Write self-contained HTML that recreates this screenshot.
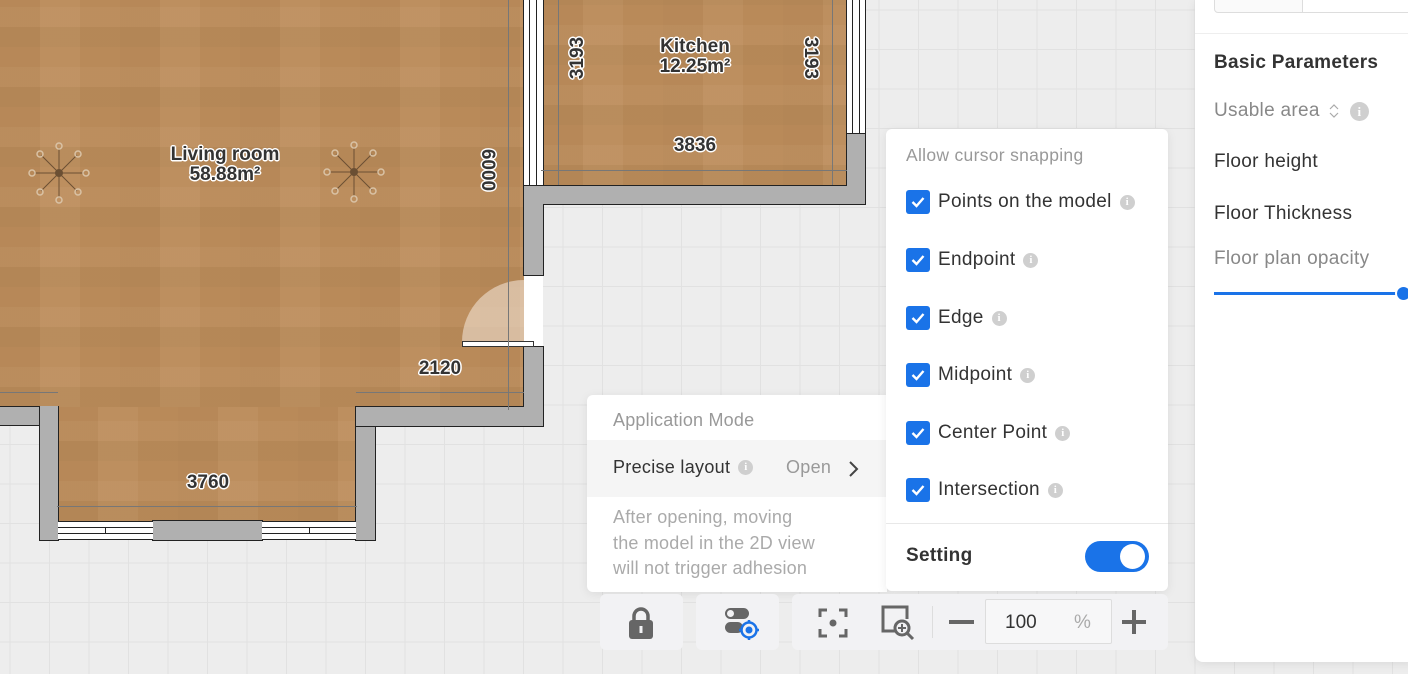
<!DOCTYPE html>
<html><head><meta charset="utf-8"><style>
*{box-sizing:border-box;margin:0;padding:0}
body{width:1408px;height:674px;overflow:hidden;position:relative;font-family:"Liberation Sans",sans-serif;
background-color:#ededed;
background-image:linear-gradient(#e1e1e1 1px,transparent 1px),linear-gradient(90deg,#e1e1e1 1px,transparent 1px);
background-size:39.5px 39.5px;background-position:9.5px 9.5px}
.a{position:absolute}
.wood{background-color:#bd8d5b;
background-image:repeating-linear-gradient(90deg,rgba(0,0,0,.025) 0 40px,rgba(255,255,255,.03) 40px 80px,rgba(0,0,0,.01) 80px 120px),
repeating-linear-gradient(0deg,rgba(0,0,0,.03) 0 20px,rgba(255,255,255,.025) 20px 40px,rgba(0,0,0,.01) 40px 60px);}
.wall{background:#b0b0b0;border:1px solid #222}
.lbl{position:absolute;font-weight:bold;font-size:19px;color:#333;text-align:center;line-height:20px;
text-shadow:-1.5px 0 #fff,1.5px 0 #fff,0 -1.5px #fff,0 1.5px #fff,-1px -1px #fff,1px 1px #fff,-1px 1px #fff,1px -1px #fff}
.dl{position:absolute;background:#777}
.panel{position:absolute;background:#fff;box-shadow:0 2px 10px rgba(0,0,0,.08)}
.it{position:absolute;left:20px;font-size:19px;letter-spacing:.3px;color:#333;display:flex;align-items:center;height:26px}
.cb{width:24px;height:24px;background:#1a73e8;border-radius:3px;margin-right:8px;display:flex;align-items:center;justify-content:center}
.inf{display:inline-block;width:15px;height:15px;border-radius:50%;background:#cfcfcf;color:#fff;font-size:11px;font-weight:bold;text-align:center;line-height:15px;margin-left:8px;font-family:"Liberation Serif",serif;letter-spacing:0}
.btn{position:absolute;background:#f2f2f4;border-radius:6px;top:594px;height:56px}
</style></head><body>

<div class="a wood" style="left:0;top:0;width:524px;height:407px"></div>
<div class="a wood" style="left:58px;top:407px;width:298px;height:114px"></div>
<div class="a wood" style="left:543px;top:0;width:304px;height:185px"></div>
<div class="a wall" style="left:-2px;top:406px;width:60px;height:20px;border-left:none"></div>
<div class="a wall" style="left:39px;top:406px;width:20px;height:135px;border-top:none"></div>
<div class="a" style="left:40px;top:407px;width:18px;height:19px;background:#b0b0b0"></div>
<div class="a wall" style="left:355px;top:406px;width:21px;height:135px"></div>
<div class="a wall" style="left:355px;top:406px;width:189px;height:21px"></div>
<div class="a" style="left:356px;top:407px;width:19px;height:19px;background:#b0b0b0"></div>
<div class="a wall" style="left:523px;top:346px;width:21px;height:81px"></div>
<div class="a" style="left:356px;top:407px;width:187px;height:19px;background:#b0b0b0"></div>
<div class="a wall" style="left:523px;top:185px;width:21px;height:91px"></div>
<div class="a wall" style="left:523px;top:185px;width:343px;height:20px"></div>
<div class="a wall" style="left:846px;top:133px;width:20px;height:72px"></div>
<div class="a" style="left:524px;top:186px;width:341px;height:18px;background:#b0b0b0"></div>
<div class="a" style="left:524px;top:186px;width:19px;height:89px;background:#b0b0b0"></div>
<div class="a" style="left:523px;top:0;width:21px;height:185px;background:#fff;border-left:1px solid #222;border-right:1px solid #222"></div>
<div class="a" style="left:529px;top:0;width:8px;height:185px;border-left:1px solid #222;border-right:1px solid #222"></div>
<div class="a" style="left:846px;top:0;width:20px;height:133px;background:#fff;border-left:1px solid #222;border-right:1px solid #222"></div>
<div class="a" style="left:852px;top:0;width:8px;height:133px;border-left:1px solid #222;border-right:1px solid #222"></div>
<div class="a wall" style="left:152px;top:520px;width:111px;height:21px"></div>
<div class="a" style="left:58px;top:521px;width:95px;height:19px;background:#fff;border-top:1px solid #222;border-bottom:1px solid #222;background-image:linear-gradient(#222,#222),linear-gradient(#222,#222),linear-gradient(#222,#222);background-size:100% 1px,100% 1px,1px 6px;background-position:0 5px,0 11px,47px 5px;background-repeat:no-repeat"></div>
<div class="a" style="left:262px;top:521px;width:94px;height:19px;background:#fff;border-top:1px solid #222;border-bottom:1px solid #222;background-image:linear-gradient(#222,#222),linear-gradient(#222,#222),linear-gradient(#222,#222);background-size:100% 1px,100% 1px,1px 6px;background-position:0 5px,0 11px,47px 5px;background-repeat:no-repeat"></div>
<div class="a" style="left:524px;top:276px;width:19px;height:70px;background:#fff"></div>
<div class="a" style="left:462px;top:280px;width:62px;height:62px;border-top-left-radius:62px;background:rgba(240,225,210,.6)"></div>
<div class="a" style="left:462px;top:341px;width:72px;height:6px;background:#fff;border:1px solid #333"></div>
<div class="dl" style="left:0;top:392px;width:58px;height:1px"></div>
<div class="dl" style="left:356px;top:392px;width:168px;height:1px"></div>
<div class="dl" style="left:508px;top:0;width:1px;height:410px"></div>
<div class="dl" style="left:57px;top:506px;width:300px;height:1px"></div>
<div class="dl" style="left:541px;top:170px;width:306px;height:1px"></div>
<div class="dl" style="left:558px;top:0;width:1px;height:185px"></div>
<div class="dl" style="left:832px;top:0;width:1px;height:185px"></div>
<svg class="a" style="left:26px;top:140px" width="66" height="66" viewBox="0 0 66 66"><g stroke="#6b4f33" stroke-width="1" fill="none"><line x1="33" y1="8" x2="33" y2="58"/><line x1="8" y1="33" x2="58" y2="33"/><line x1="15" y1="15" x2="51" y2="51"/><line x1="51" y1="15" x2="15" y2="51"/></g><circle cx="33" cy="33" r="4" fill="#6b4f33"/><g fill="none" stroke="#d9c2a5" stroke-width="1.5"><circle cx="33" cy="6" r="3"/><circle cx="33" cy="60" r="3"/><circle cx="6" cy="33" r="3"/><circle cx="60" cy="33" r="3"/><circle cx="14" cy="14" r="3"/><circle cx="52" cy="14" r="3"/><circle cx="14" cy="52" r="3"/><circle cx="52" cy="52" r="3"/></g></svg>
<svg class="a" style="left:321px;top:139px" width="66" height="66" viewBox="0 0 66 66"><g stroke="#6b4f33" stroke-width="1" fill="none"><line x1="33" y1="8" x2="33" y2="58"/><line x1="8" y1="33" x2="58" y2="33"/><line x1="15" y1="15" x2="51" y2="51"/><line x1="51" y1="15" x2="15" y2="51"/></g><circle cx="33" cy="33" r="4" fill="#6b4f33"/><g fill="none" stroke="#d9c2a5" stroke-width="1.5"><circle cx="33" cy="6" r="3"/><circle cx="33" cy="60" r="3"/><circle cx="6" cy="33" r="3"/><circle cx="60" cy="33" r="3"/><circle cx="14" cy="14" r="3"/><circle cx="52" cy="14" r="3"/><circle cx="14" cy="52" r="3"/><circle cx="52" cy="52" r="3"/></g></svg>
<div class="lbl" style="left:145px;top:145px;width:160px">Living room<br>58.88m²</div>
<div class="lbl" style="left:615px;top:37px;width:160px">Kitchen<br>12.25m²</div>
<div class="lbl" style="left:410px;top:359px;width:60px">2120</div>
<div class="lbl" style="left:178px;top:473px;width:60px">3760</div>
<div class="lbl" style="left:665px;top:136px;width:60px">3836</div>
<div class="lbl" style="left:548px;top:48px;width:60px;transform:rotate(-90deg)">3193</div>
<div class="lbl" style="left:780px;top:48px;width:60px;transform:rotate(90deg)">3193</div>
<div class="lbl" style="left:457px;top:160px;width:60px;transform:rotate(90deg)">6000</div>

<div class="panel" style="left:1195px;top:0;width:220px;height:662px;border-radius:0 0 0 8px">
 <div class="a" style="left:19px;top:-2px;width:200px;height:15px;border:1px solid #ddd;border-radius:0 0 0 4px;background:#fafafa"></div>
 <div class="a" style="left:107px;top:-2px;width:1px;height:15px;background:#ddd"></div>
 <div class="a" style="left:108px;top:-1px;width:110px;height:13px;background:#fff"></div>
 <div class="a" style="left:0;top:33px;width:220px;height:1px;background:#eee"></div>
 <div class="a" style="left:19px;top:52px;font-size:19px;font-weight:bold;color:#333;letter-spacing:.3px">Basic Parameters</div>
 <div class="a" style="left:19px;top:100px;font-size:19px;color:#888;letter-spacing:.3px;display:flex;align-items:center">Usable area <svg style="margin-left:9px" width="10" height="16" viewBox="0 0 10 16"><path d="M1 6l4-4 4 4M1 10l4 4 4-4" fill="none" stroke="#aaa" stroke-width="1.2"/></svg><span class="inf" style="margin-left:11px;width:19px;height:19px;line-height:19px;font-size:13px">i</span></div>
 <div class="a" style="left:19px;top:151px;font-size:19px;color:#333;letter-spacing:.3px">Floor height</div>
 <div class="a" style="left:19px;top:203px;font-size:19px;color:#333;letter-spacing:.3px">Floor Thickness</div>
 <div class="a" style="left:19px;top:248px;font-size:19px;color:#888;letter-spacing:.3px">Floor plan opacity</div>
 <div class="a" style="left:19px;top:292px;width:190px;height:3px;background:#1a73e8"></div>
 <div class="a" style="left:202px;top:287px;width:13px;height:13px;border-radius:50%;background:#1a73e8;box-shadow:0 0 0 2px #fff"></div>
</div>

<div class="panel" style="left:587px;top:395px;width:300px;height:197px;border-radius:6px 0 0 6px">
 <div class="a" style="left:26px;top:15px;font-size:18px;color:#999;letter-spacing:.2px">Application Mode</div>
 <div class="a" style="left:0;top:45px;width:300px;height:57px;background:#f5f5f5"></div>
 <div class="a" style="left:26px;top:62px;font-size:18px;color:#333;display:flex;align-items:center;letter-spacing:.3px">Precise layout<span class="inf">i</span></div>
 <div class="a" style="left:199px;top:62px;font-size:18px;color:#999;letter-spacing:.3px">Open</div>
 <svg class="a" style="left:260px;top:65px" width="12" height="18" viewBox="0 0 12 18"><path d="M3 2l7 7-7 7" fill="none" stroke="#444" stroke-width="2"/></svg>
 <div class="a" style="left:26px;top:110px;font-size:18px;line-height:25.5px;color:#aaa;letter-spacing:.2px">After opening, moving<br>the model in the 2D view<br>will not trigger adhesion</div>
</div>

<div class="panel" style="left:886px;top:129px;width:282px;height:462px;border-radius:6px">
 <div class="a" style="left:20px;top:16px;font-size:17.5px;color:#999;letter-spacing:.3px">Allow cursor snapping</div>
 <div class="it" style="top:60px"><span class="cb"><svg width="14" height="12" viewBox="0 0 14 12"><path d="M1.5 6l4 4 7-8" fill="none" stroke="#fff" stroke-width="2.4"/></svg></span>Points on the model<span class="inf">i</span></div>
 <div class="it" style="top:118px"><span class="cb"><svg width="14" height="12" viewBox="0 0 14 12"><path d="M1.5 6l4 4 7-8" fill="none" stroke="#fff" stroke-width="2.4"/></svg></span>Endpoint<span class="inf">i</span></div>
 <div class="it" style="top:176px"><span class="cb"><svg width="14" height="12" viewBox="0 0 14 12"><path d="M1.5 6l4 4 7-8" fill="none" stroke="#fff" stroke-width="2.4"/></svg></span>Edge<span class="inf">i</span></div>
 <div class="it" style="top:233px"><span class="cb"><svg width="14" height="12" viewBox="0 0 14 12"><path d="M1.5 6l4 4 7-8" fill="none" stroke="#fff" stroke-width="2.4"/></svg></span>Midpoint<span class="inf">i</span></div>
 <div class="it" style="top:291px"><span class="cb"><svg width="14" height="12" viewBox="0 0 14 12"><path d="M1.5 6l4 4 7-8" fill="none" stroke="#fff" stroke-width="2.4"/></svg></span>Center Point<span class="inf">i</span></div>
 <div class="it" style="top:348px"><span class="cb"><svg width="14" height="12" viewBox="0 0 14 12"><path d="M1.5 6l4 4 7-8" fill="none" stroke="#fff" stroke-width="2.4"/></svg></span>Intersection<span class="inf">i</span></div>
 <div class="a" style="left:0;top:394px;width:282px;height:1px;background:#e8e8e8"></div>
 <div class="a" style="left:20px;top:416px;font-size:19px;font-weight:bold;color:#333;letter-spacing:.3px">Setting</div>
 <div class="a" style="left:199px;top:412px;width:64px;height:31px;border-radius:16px;background:#1a73e8"><div class="a" style="left:35px;top:3px;width:25px;height:25px;border-radius:50%;background:#fff"></div></div>
</div>

<div class="btn" style="left:600px;width:83px"><svg class="a" style="left:26px;top:12px" width="30" height="34" viewBox="0 0 30 34"><path d="M8 15V10a7 7 0 0 1 14 0v5" fill="none" stroke="#666" stroke-width="3.5"/><rect x="3" y="14" width="24" height="19" rx="3" fill="#666"/><rect x="13.5" y="20" width="3" height="7" fill="#f2f2f4"/></svg></div>
<div class="btn" style="left:696px;width:83px"><svg class="a" style="left:26px;top:12px" width="40" height="36" viewBox="0 0 40 36"><rect x="3" y="2" width="24" height="11" rx="5.5" fill="#666"/><circle cx="8.5" cy="7.5" r="3.5" fill="#f2f2f4"/><rect x="3" y="16" width="18" height="11" rx="5.5" fill="#666"/><circle cx="27" cy="24" r="7.5" fill="none" stroke="#1a73e8" stroke-width="2.5"/><circle cx="27" cy="24" r="3.5" fill="#1a73e8"/><path d="M27 14v3M27 31v3M17 24h3M34 24h3" stroke="#1a73e8" stroke-width="2.5"/></svg></div>
<div class="btn" style="left:792px;width:376px">
 <svg class="a" style="left:26px;top:14px" width="30" height="30" viewBox="0 0 30 30"><path d="M2 9V2h7M21 2h7v7M28 21v7h-7M9 28H2v-7" fill="none" stroke="#666" stroke-width="3"/><circle cx="15" cy="15" r="3.5" fill="#666"/></svg>
 <svg class="a" style="left:88px;top:10px" width="36" height="38" viewBox="0 0 36 38"><path d="M16 27H3V3h24v12" fill="none" stroke="#666" stroke-width="3"/><circle cx="22" cy="24" r="7" fill="none" stroke="#666" stroke-width="3"/><path d="M27 29l6 6" stroke="#666" stroke-width="3"/><path d="M22 20v8M18 24h8" stroke="#666" stroke-width="2"/></svg>
 <div class="a" style="left:140px;top:12px;width:1px;height:32px;background:#ddd"></div>
 <div class="a" style="left:157px;top:26px;width:25px;height:4px;background:#666"></div>
 <div class="a" style="left:193px;top:5px;width:127px;height:45px;border:1px solid #ddd;background:#f7f7f8;border-radius:2px"><span class="a" style="left:19px;top:12px;font-size:19px;color:#333">100</span><span class="a" style="left:88px;top:12px;font-size:19px;color:#aaa">%</span></div>
 <div class="a" style="left:330px;top:26px;width:24px;height:4px;background:#666"></div>
 <div class="a" style="left:340px;top:16px;width:4px;height:24px;background:#666"></div>
</div>
</body></html>
